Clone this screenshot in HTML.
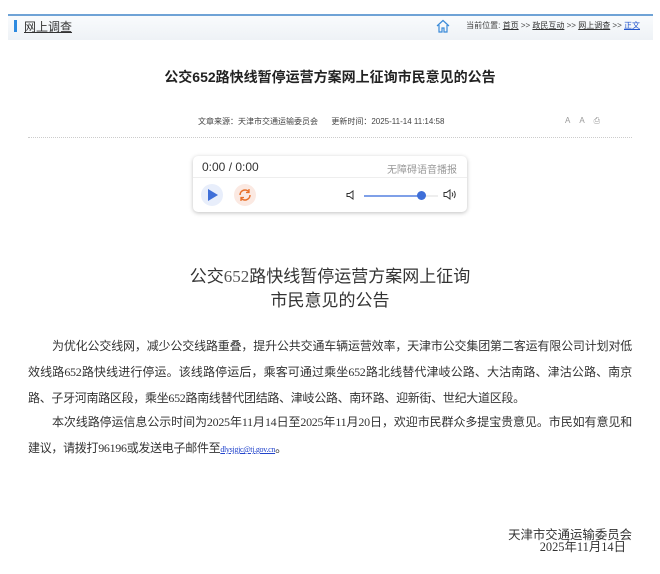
<!DOCTYPE html>
<html><head><meta charset="utf-8">
<style>
*{margin:0;padding:0;box-sizing:border-box}
body{width:660px;height:574px;background:#fff;font-family:"Liberation Sans","Noto Sans CJK SC",sans-serif;color:#333;position:relative;overflow:hidden}
.abs{position:absolute}
.hdr{left:8px;top:14px;width:645px;height:26px;border-top:2px solid #6fa3d6;background:linear-gradient(#f9fbfd,#eef2f6)}
.bar{left:14px;top:20px;width:3px;height:12px;background:#2d8ae0}
.nav{right:20px;top:20px;font-size:8px;color:#444}
.nav u{color:#333}
.j{display:block;white-space:nowrap;text-align:justify;text-align-last:justify}
.l{display:block;white-space:nowrap}
</style></head><body>
<div class="abs hdr"></div>
<div class="abs bar"></div>
<div class="abs" style="left:24px;top:18px;font-size:12px;color:#333;text-decoration:underline">网上调查</div>
<svg class="abs" style="left:436px;top:19px" width="14" height="14" viewBox="0 0 14 14"><path d="M1 7 L7 1.5 L13 7 M3 6 V13 H6 V9 H8 V13 H11 V6" fill="none" stroke="#3a8ad8" stroke-width="1.2"/></svg>
<div class="abs nav">当前位置: <u>首页</u> &gt;&gt; <u>政民互动</u> &gt;&gt; <u>网上调查</u> &gt;&gt; <u style="color:#2255cc">正文</u></div>
<div class="abs" style="left:0;width:660px;top:67px;text-align:center;font-size:14px;font-weight:bold;color:#222">公交652路快线暂停运营方案网上征询市民意见的公告</div>
<div class="abs" style="left:198px;top:116px;font-size:8px;color:#444">文章来源：天津市交通运输委员会&nbsp;&nbsp;&nbsp;&nbsp;&nbsp;&nbsp;更新时间：2025-11-14 11:14:58</div>
<div class="abs" style="left:565px;top:116px;font-size:8px;color:#999;letter-spacing:9px">AA⎙</div>
<div class="abs" style="left:28px;top:137px;width:604px;border-top:1px dotted #ccc"></div>
<div class="abs" style="left:193px;top:156px;width:274px;height:56px;border-radius:5px;box-shadow:0 1px 4px rgba(0,0,0,.25);background:#fff">
 <div class="abs" style="left:9px;top:4px;font-size:12px;color:#333">0:00 / 0:00</div>
 <div class="abs" style="right:10px;top:5px;font-size:10px;color:#999">无障碍语音播报</div>
 <div class="abs" style="left:0;top:21px;width:274px;border-top:1px solid #eee"></div>
 <div class="abs" style="left:8px;top:28px;width:22px;height:22px;border-radius:50%;background:#e8eefb"></div>
 <svg class="abs" style="left:14px;top:33px" width="12" height="12"><path d="M1 0 L11 6 L1 12Z" fill="#3f6fd8"/></svg>
 <div class="abs" style="left:41px;top:28px;width:22px;height:22px;border-radius:50%;background:#fbe9e2"></div>
 <svg class="abs" style="left:45px;top:32px" width="14" height="14" viewBox="0 0 14 14"><path d="M2 7 A5 5 0 0 1 11 4 M12 7 A5 5 0 0 1 3 10" fill="none" stroke="#e8702a" stroke-width="1.5"/><path d="M11 1 V4.5 H8 M3 13 V9.5 H6" fill="none" stroke="#e8702a" stroke-width="1.3"/></svg>
 <svg class="abs" style="left:153px;top:34px" width="10" height="10"><path d="M1 3.5 H3.5 L7 1 V9 L3.5 6.5 H1Z" fill="none" stroke="#333"/></svg>
 <div class="abs" style="left:171px;top:39px;width:57px;height:2px;background:#7fa0e8"></div>
 <div class="abs" style="left:228px;top:39px;width:17px;height:2px;background:#eee"></div>
 <div class="abs" style="left:224px;top:35px;width:9px;height:9px;border-radius:50%;background:#3f6fd8"></div>
 <svg class="abs" style="left:250px;top:33px" width="14" height="12"><path d="M1 3.5 H3.5 L7 1 V10 L3.5 7.5 H1Z" fill="none" stroke="#333"/><path d="M9 3.5 Q10.5 5.5 9 7.5 M11 2 Q13.5 5.5 11 9" fill="none" stroke="#333"/></svg>
</div>
<div class="abs" style="left:0;width:660px;top:265px;text-align:center;font-size:17px;line-height:24px;color:#333">公交<span style="font-family:'Liberation Serif';color:#555">652</span>路快线暂停运营方案网上征询<br>市民意见的公告</div>
<div class="abs" style="left:28px;top:333px;width:604px;font-size:12px;letter-spacing:-0.3px;line-height:26px;color:#333;font-family:'Liberation Serif','Noto Sans CJK SC',serif">
<span class="j" style="padding-left:24px">为优化公交线网，减少公交线路重叠，提升公共交通车辆运营效率，天津市公交集团第二客运有限公司计划对低</span>
<span class="j">效线路652路快线进行停运。该线路停运后，乘客可通过乘坐652路北线替代津岐公路、大沽南路、津沽公路、南京</span>
<span class="l">路、子牙河南路区段，乘坐652路南线替代团结路、津岐公路、南环路、迎新街、世纪大道区段。</span>
<span class="j" style="padding-left:24px;margin-top:-2px">本次线路停运信息公示时间为2025年11月14日至2025年11月20日，欢迎市民群众多提宝贵意见。市民如有意见和</span>
<span class="l">建议，请拨打96196或发送电子邮件至<u style="color:#2244cc;font-size:8px">dlysjgjc@tj.gov.cn</u>。</span>
</div>
<div class="abs" style="right:28px;top:529px;font-size:12.4px;line-height:12px;text-align:right;font-family:'Liberation Serif','Noto Sans CJK SC',serif;color:#333">天津市交通运输委员会<br><span style="margin-right:6px">2025年11月14日</span></div>
</body></html>
